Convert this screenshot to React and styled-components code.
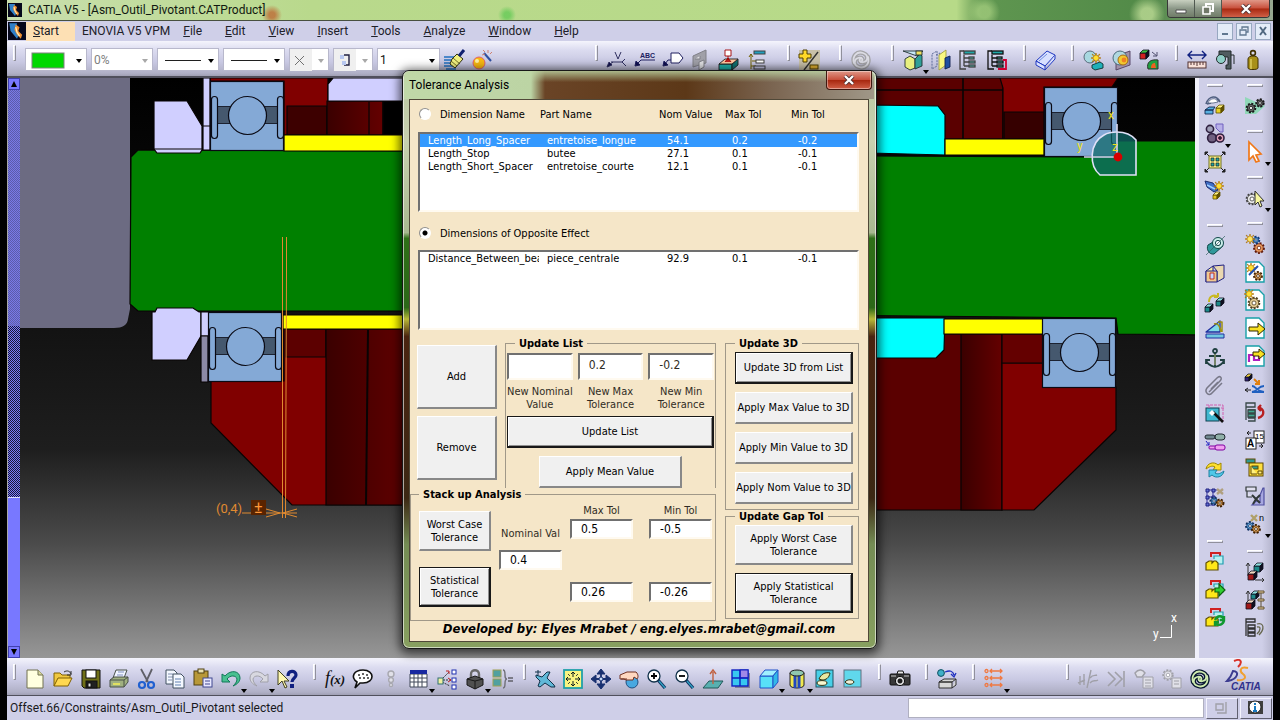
import React, { useState } from "react";
//packages
import styled, { createGlobalStyle, css } from "styled-components";

//small shapes shared by several icons
const Gear = ({ x, y, r = 4, fill = "#f0b060", line = "#402000" }) => (
	<g>
		<circle cx={x} cy={y} r={r} fill={fill} stroke={line} strokeWidth="2.6" strokeDasharray="1.8 1.3" />
		<circle cx={x} cy={y} r={r - 0.4} fill={fill} stroke={line} strokeWidth="0.7" />
		<circle cx={x} cy={y} r={r * 0.4} fill="#fff" stroke={line} strokeWidth="0.8" />
	</g>
);

const Cube = ({ x, y, s = 7, fill = "#1c8a8a", top = "#8fe0e0", line = "#101020" }) => (
	<g stroke={line} strokeWidth="0.8" strokeLinejoin="round">
		<path d={`M${x} ${y + 3}h${s}v${s}h${-s}z`} fill={fill} />
		<path d={`M${x} ${y + 3}l3-3h${s}l-3 3z`} fill={top} />
		<path d={`M${x + s} ${y + 3}l3-3v${s}l-3 3z`} fill={line} />
	</g>
);

const Spark = ({ x, y, fill = "#ffe030" }) => (
	<path
		d={`M${x} ${y - 5}l1 3 3-2-2 3 3 1-3 1 2 3-3-2-1 3-1-3-3 2 2-3-3-1 3-1-2-3 3 2z`}
		fill={fill}
		stroke="#a06000"
		strokeWidth="0.6"
	/>
);

const Sheet = () => (
	<path d="M1 0h13l5 5v15H1z" fill="#fff" stroke="#18a0a8" strokeWidth="1.4" />
);

const hook = "M3 13C1 6 6 1 12 3s5 8 1 9-6-2-3-4";

const Swirl = ({ line, fill }) => (
	<g fill="none" strokeLinecap="round">
		{[line, fill].map((color, i) => (
			<g key={color} stroke={color} strokeWidth={i ? 1.8 : 4.4}>
				<path d={hook} />
				<path d={hook} transform="rotate(180 10 10)" />
			</g>
		))}
	</g>
);

const Lens = ({ plus }) => (
	<g fill="none">
		<path d="M11 11l7 8" stroke="#103060" strokeWidth="3.4" />
		<path d="M12 12l6 7" stroke="#30a0c0" strokeWidth="1.4" />
		<circle cx="7" cy="7" r="6" fill="#fff" stroke="#103048" strokeWidth="1.3" />
		<path d={plus ? "M4 7h6M7 4v6" : "M4 7h6"} stroke="#000" strokeWidth="1.8" />
	</g>
);

const TreeGlyph = ({ line = "#404040", children }) => (
	<g fill="none" stroke={line} strokeWidth="1.3">
		<path d="M5 1H1v18h6M5 5v11M5 8h5M5 12h5M5 16h5" />
		<rect x="5" y="1" width="11" height="3" fill="#20a8a8" />
		<rect x="10" y="7" width="5" height="2" fill="#50c0b8" />
		<rect x="10" y="11" width="6" height="2" fill="#50c0b8" />
		<rect x="10" y="15" width="6" height="2" fill="#50c0b8" />
		{children}
	</g>
);

const PartStack = ({ children }) => (
	<g strokeWidth="1.2">
		<path d="M6 5V1h9v3" fill="none" stroke="#d02020" strokeWidth="2" />
		<path d="M9 7V4h9v8h-5" fill="#b8f0f0" stroke="#20a0b0" />
		<path d="M1 11l3-2h3v2l2-2h2l2 2v7H1z" fill="#ffe818" stroke="#605000" />
		{children}
	</g>
);

const icons = {
	paint: (
		<g>
			<path d="M0 7h10M0 10h9M0 13h9M0 16h10M2 19h10" stroke="#2070c0" strokeWidth="1.5" />
			<path d="M8 9l5-5 6 5-8 9-5-4z" fill="#f0f080" stroke="#303010" />
			<path d="M9 8l7 6M7 11l6 5" stroke="#505010" strokeWidth="0.8" />
			<path d="M15 6l5-6" stroke="#102070" strokeWidth="3" />
		</g>
	),
	wizard: (
		<g>
			<circle cx="7" cy="13" r="6" fill="#f8b810" stroke="#e06070" />
			<circle cx="5" cy="11" r="2" fill="#fff0a0" />
			<path d="M12 3l7 8" stroke="#3050a0" strokeWidth="2" />
			<path d="M11 0l2 2M16 0v3M10 5l3-1M18 4l2-2" stroke="#d08070" />
		</g>
	),
	weld: (
		<g fill="none" stroke="#303060">
			<path d="M8 2l3 7 3-7M4 12h12M18 9l-3 3 4 4M2 15l4-3" />
			<path d="M0 17l5-2-3-3z" fill="#101050" />
		</g>
	),
	textNote: (
		<g fill="none" stroke="#202060">
			<path d="M2 14l4-4h14" />
			<path d="M0 16l5-1-4-4z" fill="#101050" />
			<text x="5" y="8" fontSize="7" fontWeight="bold" fontFamily="Liberation Sans, sans-serif" fill="#202060" stroke="none">ABC</text>
		</g>
	),
	flagNote: (
		<g stroke="#202060">
			<path d="M8 3h8l4 5-4 5H8z" fill="#fff" />
			<path d="M8 10H5l-3 4" fill="none" />
			<path d="M0 16l5-1-4-4z" fill="#101050" />
		</g>
	),
	front: (
		<g stroke="#808088">
			<path d="M2 6L15 0v13L2 17z" fill="#a0a0a8" />
			<path d="M4 9h5v-3M13 10l-5 2v8l5-3z" fill="#e0e0e4" />
		</g>
	),
	stamp: (
		<g stroke="#202020" strokeWidth="0.9">
			<path d="M0 14h13v6H0z" fill="#20b0a8" />
			<path d="M13 14l6-5v6l-6 5z" fill="#107070" />
			<path d="M0 14l6-5h13l-6 5z" fill="#ffc8a0" />
			<path d="M6 0h6v6H6z" fill="#fff" stroke="#a00000" />
			<path d="M9 6v4M6 12l3-4 3 4" fill="#c02020" stroke="#a00000" />
		</g>
	),
	annotTree: (
		<g fill="none" stroke="#404040">
			<path d="M4 19V4M2 7l2-3 2 3M5 11h4M4 16h5" stroke="#706000" />
			<rect x="7" y="1" width="11" height="3" fill="#20a0c0" />
			<rect x="9" y="10" width="8" height="3" fill="#fff" />
			<rect x="7" y="16" width="11" height="3" fill="#c0c0e0" />
		</g>
	),
	plusMinus: (
		<g>
			<rect width="21" height="20" fill="#c8c0a8" />
			<path d="M4 0h4v4h4v4H8v4H4V8H0V4h4z" fill="#ffd828" stroke="#504000" />
			<path d="M19 2L5 20" stroke="#303030" strokeWidth="1.4" />
			<rect x="11" y="15" width="8" height="4" fill="#e0b030" stroke="#504000" />
		</g>
	),
	swirlGray: <Swirl line="#a4a4a8" fill="#dcdce4" />,
	sectionCut: (
		<g stroke="#203030" strokeWidth="0.9">
			<path d="M0 1h20l-6 5z" fill="#c8e8f8" />
			<path d="M2 9l5-3 5 3v9l-5 2-5-3z" fill="#e8f080" />
			<path d="M12 9l5-5 2 2v10l-7 3z" fill="#30a098" />
			<rect x="13" y="1" width="6" height="4" fill="#f0e060" />
		</g>
	),
	mirror: (
		<g strokeWidth="0.9">
			<path d="M1 4l5-3v15l-5 3zM5 5l4-2v12" fill="none" stroke="#506090" strokeDasharray="2 1" />
			<path d="M8 5l7-5v15l-7 5z" fill="#f8f880" stroke="#a0a040" />
			<path d="M14 8l5-2v11l-5 2z" fill="#2050a0" stroke="#102050" />
		</g>
	),
	tree: <TreeGlyph />,
	treeRed: (
		<TreeGlyph line="#101010">
			<path d="M16 10h3v9h-8" stroke="#d00030" strokeWidth="1.8" />
		</TreeGlyph>
	),
	book: (
		<g fill="#d8e0ff" stroke="#2038c0" strokeLinejoin="round">
			<path d="M1 11L12 1l8 4-10 11z" />
			<path d="M1 11l9 5v4l-9-5zM10 20l10-11V5" />
			<path d="M4 11l8-7" stroke="#7090e0" />
		</g>
	),
	clash: (
		<g stroke="#103030" strokeWidth="0.9">
			<circle cx="7" cy="7" r="6" fill="#a8d8e0" stroke="#506070" />
			<path d="M9 15l8-3 3 2v4l-8 2-3-2z" fill="#20b0b8" />
			<Spark x={13} y={8} />
		</g>
	),
	sectionBall: (
		<g strokeWidth="0.9">
			<path d="M5 6L19 1v14L5 20z" fill="#a090a8" stroke="#504060" />
			<circle cx="9" cy="8" r="7" fill="#b0d8e0" stroke="#406070" />
			<circle cx="12" cy="10" r="5" fill="#f0c830" stroke="#a06010" />
			<circle cx="13" cy="10" r="2.4" fill="#f08020" />
		</g>
	),
	compareParts: (
		<g>
			<Cube x={1} y={0} s={6} fill="#d02020" top="#40c040" />
			<path d="M13 2l5 4M18 2v4h-4" stroke="#505070" fill="none" />
			<path d="M9 19c-2-7 3-10 10-9v9z" fill="#20a040" stroke="#303030" />
			<path d="M12 18c0-4 2-5 4-5l1 5z" fill="#f06020" />
		</g>
	),
	ruler: (
		<g stroke="#102080" fill="none">
			<path d="M1 5h18M5 1L1 5l4 4M15 1l4 4-4 4" strokeWidth="1.4" />
			<rect x="1" y="12" width="18" height="6" fill="#f8e0d8" stroke="#503030" />
			<path d="M4 12v3M7 12v3M10 12v4M13 12v3M16 12v3" stroke="#503030" />
		</g>
	),
	caliper: (
		<g stroke="#202828">
			<path d="M4 1h12v18h-5v-4h2V7H9v4H6V5H4z" fill="#505c60" />
			<circle cx="6" cy="9" r="4.5" fill="#90d0c8" />
			<path d="M16 5h3v9" fill="none" />
		</g>
	),
	weight: (
		<g stroke="#403000">
			<circle cx="10" cy="3" r="2.4" fill="none" strokeWidth="1.6" />
			<path d="M5 9c0-4 10-4 10 0v9c0 2-10 2-10 0z" fill="#a89018" />
			<path d="M8 9v10" stroke="#e0d060" strokeWidth="1.4" />
		</g>
	),
	assemble: (
		<g>
			<path d="M1 8c3-9 11-9 14-2M2 8l4-1M12 3l3 3" stroke="#506080" fill="none" strokeWidth="1.6" />
			<path d="M3 7c2-5 8-6 10-1l-5 1z" fill="#fff" stroke="#506080" strokeWidth="0.8" />
			<path d="M0 14l4-3h6l-2 3zM0 14h8v4H0z" fill="#58b0e0" stroke="#102850" strokeWidth="0.9" />
			<Cube x={11} y={9} s={5} fill="#e8d020" top="#fff080" line="#605000" />
		</g>
	),
	replaceParts: (
		<g stroke="#302040">
			<path d="M11 0h7v8h-3l-4-4z" fill="#b8b0e8" stroke="#7060c0" />
			<circle cx="5" cy="5" r="3.6" fill="#a0a0b8" strokeWidth="1.6" />
			<circle cx="7" cy="14" r="4.4" fill="#706080" strokeWidth="1.6" />
			<circle cx="15" cy="14" r="4" fill="#e0a0b8" strokeWidth="1.6" />
			<circle cx="15" cy="14" r="1.4" fill="#401020" />
		</g>
	),
	explode: (
		<g stroke="#202020">
			<path d="M0 0l5 5M20 0l-5 5M0 20l5-5M20 20l-5-5" />
			<path d="M0 0h3L0 3zM20 0h-3l3 3zM0 20h3l-3-3zM20 20h-3l3-3z" fill="#202020" />
			<rect x="4" y="4" width="12" height="12" fill="#f8f088" stroke="#707020" />
			<path d="M6 6h3v3H6zM11 6h3v3h-3zM6 11h3v3H6zM11 11h3v3h-3z" fill="#20a8a0" strokeWidth="0.7" />
		</g>
	),
	smartMove: (
		<g strokeWidth="0.9">
			<path d="M0 1l8 2 5 7-4 2-7-5z" fill="#4070c8" stroke="#102060" />
			<path d="M2 5l8 4" stroke="#a0d0ff" strokeWidth="1.4" />
			<Cube x={8} y={12} s={4} fill="#e8c820" top="#fff080" line="#605000" />
			<Spark x={14} y={6} />
		</g>
	),
	coincidence: (
		<g stroke="#104848">
			<path d="M3 9L13 3l5 7-9 8c-5 1-8-5-6-9z" fill="#30989a" />
			<circle cx="13" cy="7" r="5.5" fill="#c8ece8" />
			<circle cx="13" cy="7" r="2.6" fill="#f4fcff" />
			<path d="M1 19L20 0" stroke="#306060" strokeWidth="0.7" />
		</g>
	),
	contact: (
		<g stroke="#202080" strokeLinejoin="round">
			<path d="M1 7l7-5v11l-7 5z" fill="#f8f0a0" />
			<path d="M8 2l11-1v13l-7 4V7z" fill="#ead8b0" />
			<path d="M1 7h11v11H1z" fill="#f0c890" />
			<path d="M5 9h4v6H5z" fill="#c8d8ff" stroke="#c03020" />
		</g>
	),
	offset: (
		<g>
			<path d="M4 10c0-6 5-8 9-5M13 5l-4 0M13 5l0-4" stroke="#c8b820" strokeWidth="2" fill="none" />
			<Cube x={0} y={12} s={5} />
			<Cube x={11} y={6} s={5} />
		</g>
	),
	angle: (
		<g strokeLinejoin="round">
			<path d="M1 12L15 1v11z" fill="#80d8e8" stroke="#2030a0" strokeWidth="1.3" />
			<path d="M9 4c4-1 6 2 7 8M13 2h4v10" stroke="#a09010" fill="none" strokeWidth="1.5" />
			<path d="M1 14h18v4H1z" fill="#70c8e0" stroke="#2030a0" />
		</g>
	),
	anchor: (
		<g fill="none" stroke="#204040" strokeWidth="1.8">
			<circle cx="10" cy="3" r="2" />
			<path d="M10 5v14M4 8h12M1 12c1 4 5 6 9 7 4-1 8-3 9-7M1 16v-4h4M19 16v-4h-4" />
			<path d="M10 6v11" stroke="#e0d890" strokeWidth="0.8" />
		</g>
	),
	clip: (
		<path
			d="M4 16L15 5c3-3 0-6-3-3L2 12c-3 4 2 9 5 5L17 7M6 13l7-7"
			fill="none"
			stroke="#787888"
			strokeWidth="1.5"
		/>
	),
	quick: (
		<g>
			<rect x="1" y="4" width="13" height="13" fill="#40b8d0" stroke="#104050" />
			<path d="M1 1h17v16M4 1v3M16 4h3" stroke="#d060b0" fill="none" strokeDasharray="3 1" />
			<path d="M8 8l10 10" stroke="#101010" strokeWidth="2.6" />
			<path d="M4 9l3-3 3 3-3 3z" fill="#fff" />
		</g>
	),
	flexible: (
		<g>
			<rect x="0" y="3" width="10" height="4" rx="2" fill="#708890" stroke="#202830" />
			<rect x="10" y="2" width="10" height="6" rx="3" fill="#90b0a8" stroke="#202830" />
			<path d="M1 9l3 4M4 10v3H1" stroke="#2020c0" fill="none" />
			<rect x="4" y="14" width="7" height="3" rx="1" fill="#f0a0f0" stroke="#8000a0" />
			<rect x="10" y="13" width="10" height="5" rx="2" fill="#f0a0f0" stroke="#8000a0" />
		</g>
	),
	change: (
		<g>
			<path d="M1 9c1-6 8-8 12-4l3-2v7H8l2-3c-3-2-6 0-9 2z" fill="#ffe030" stroke="#a08800" />
			<path d="M19 11c-1 6-8 8-12 4l-3 2v-7h8l-2 3c3 2 6 0 9-2z" fill="#50c8e8" stroke="#2080a0" />
		</g>
	),
	pattern: (
		<g>
			<path d="M2 2v16M8 2v16M2 2h10M2 9h8M2 17h8" stroke="#3030a0" />
			<path d="M1 1h3v3H1zM7 1h3v3H7zM1 8h3v3H1zM7 8h3v3H7zM1 15h3v3H1z" fill="#6070d0" stroke="#202080" />
			<path d="M12 1l6 5M18 1l-6 5" stroke="#b0a080" strokeWidth="2.4" />
			<Gear x={9} y={13} r={3.2} fill="#60a8e0" line="#103060" />
			<Gear x={15} y={15} r={3.2} />
		</g>
	),
	stack1: <PartStack />,
	stack2: (
		<PartStack>
			<path d="M10 8h4V4l6 6-6 6v-4h-4z" fill="#30d030" stroke="#106010" />
		</PartStack>
	),
	stack3: (
		<PartStack>
			<path d="M10 12c2-5 8-5 9 0M19 13c-2 5-8 5-9 1M19 8v4h-4M10 18v-4h4" stroke="#109830" strokeWidth="2.4" fill="none" />
		</PartStack>
	),
	gearsDark: (
		<g>
			<path d="M0 1l20 9-9 8H0z" fill="#90d8b8" />
			<Gear x={6} y={12} r={4} fill="#686868" line="#181818" />
			<Gear x={15} y={7} r={3.4} fill="#686868" line="#181818" />
		</g>
	),
	arrowOrange: (
		<path d="M4 0l12 12-5 1 3 6-3 1-3-6-4 4z" fill="#fff" stroke="#f07818" strokeWidth="1.7" />
	),
	gearCursor: (
		<g>
			<Gear x={7} y={11} r={5} fill="#e8e8e8" line="#404040" />
			<path d="M10 3l9 10-4 0 2 5-2 1-2-5-3 3z" fill="#f8f8a0" stroke="#303030" />
		</g>
	),
	gearSpark: (
		<g>
			<Gear x={14} y={14} r={4.6} fill="#f0a060" line="#601808" />
			<Gear x={11} y={6} r={3} fill="#60b0e0" line="#103878" />
			<Spark x={5} y={5} fill="#ffe860" />
		</g>
	),
	gearSheet1: (
		<g>
			<Sheet />
			<Spark x={6} y={6} />
			<path d="M4 13l9-9" stroke="#2050b0" strokeWidth="2" />
			<Gear x={13} y={14} r={3.6} />
		</g>
	),
	gearSheet2: (
		<g>
			<Sheet />
			<Gear x={9} y={13} r={5} fill="#e0c890" line="#504020" />
			<Spark x={4} y={4} />
		</g>
	),
	sheetArrow: (
		<g>
			<Sheet />
			<path d="M4 9h9V5l7 6-7 6v-4H4z" fill="#f8e020" stroke="#302800" />
		</g>
	),
	sheetLink: (
		<g>
			<Sheet />
			<path d="M4 16V9h5v5h5V9" fill="none" stroke="#b020c0" strokeWidth="2.2" />
			<path d="M8 6h6V3l6 5-6 5v-3H8z" fill="#f8e020" stroke="#302800" />
		</g>
	),
	isolate: (
		<g>
			<Cube x={0} y={0} s={4} fill="#302078" top="#f0d040" />
			<path d="M9 5l5 5M14 6v4h-4" stroke="#e08010" strokeWidth="2" fill="none" />
			<path d="M7 12c4 0 4 5 12 6M19 12c-6 0-6 5-12 6h12" stroke="#2060c0" strokeWidth="1.8" fill="none" />
			<path d="M0 16h6M3 14l-3 2 3 2" stroke="#202020" fill="none" />
		</g>
	),
	treeUndo: (
		<g fill="none" stroke="#384848" strokeWidth="1.3">
			<path d="M1 5V1h9v4H1v13M3 8h7v3H3M3 12h7v3H3M3 16h7v3H3" />
			<path d="M3 8h7v3H3zM3 12h7v3H3z" fill="#40a890" />
			<path d="M13 6c6-1 8 8 0 10M13 6l3-3M13 6l3 3" stroke="#b82020" strokeWidth="2.4" />
		</g>
	),
	renumber: (
		<g stroke="#202020" fill="#fff">
			<rect x="9" y="1" width="10" height="12" />
			<rect x="1" y="8" width="10" height="11" />
			<path d="M2 3h4M4 1L2 3l2 2M14 16h4M16 14l2 2-2 2" fill="none" />
			<text x="2" y="17" fontSize="10" fontFamily="Liberation Sans, sans-serif" fontWeight="bold" fill="#000" stroke="none">A</text>
			<text x="10" y="9" fontSize="8" fontFamily="Liberation Sans, sans-serif" fill="#000" stroke="none">15</text>
		</g>
	),
	reorder: (
		<g stroke="#604800">
			<rect x="1" y="1" width="9" height="4" fill="#309890" />
			<rect x="4" y="5" width="14" height="13" fill="#ffe040" />
			<rect x="7" y="8" width="6" height="3" fill="#30a090" />
			<path d="M6 8v8h6M13 13h4v3h-4z" fill="#fff080" />
		</g>
	),
	treeBlue: (
		<g fill="none" stroke="#303838" strokeWidth="1.2">
			<path d="M19 2v17H7l4-4 4 1V9l3-7z" fill="#a8a8e0" stroke="#5050a0" />
			<path d="M1 1h10v4H1zM2 5v6h5" fill="#e0e0f0" />
			<path d="M7 9l4 4 4-4M11 13l-3 5M11 13l4 4" strokeWidth="2" />
		</g>
	),
	gearsN: (
		<g>
			<path d="M6 1l6 6M12 1L6 7" stroke="#b0a068" strokeWidth="2.4" />
			<text x="14" y="7" fontSize="9" fontFamily="Liberation Sans, sans-serif" fill="#000">n</text>
			<Gear x={5} y={12} r={3.6} fill="#60a8e0" line="#103060" />
			<Gear x={11} y={15} r={3.6} />
		</g>
	),
	cubeFrame: (
		<g>
			<path d="M3 14V1M1 4l2-3 2 3M10 18h9M17 16l2 2-2 2" stroke="#303030" fill="none" />
			<Cube x={9} y={1} s={6} />
			<Cube x={3} y={9} s={6} fill="#a01818" top="#f0d8c0" />
		</g>
	),
	cubeBars: (
		<g>
			<path d="M3 14V1M1 4l2-3 2 3" stroke="#303030" fill="none" />
			<Cube x={6} y={1} s={5} />
			<Cube x={1} y={10} s={6} fill="#a01818" top="#f0d8c0" />
			<path d="M13 1h6v2h-6zM13 9h6v2h-6zM13 17h6v2h-6zM16 3v6M16 11v6" fill="#e8d0a0" stroke="#605030" />
		</g>
	),
	treeClip: (
		<g fill="none" stroke="#303030" strokeWidth="1.3">
			<path d="M1 4V1h9v3H1v14M3 7h7v3H3zM3 11h7v3H3zM3 15h7v3H3z" />
			<path d="M12 6c7-2 8 5 2 11M12 9c4-1 4 3 0 7" stroke="#686850" />
		</g>
	),
	newDoc: (
		<g>
			<path d="M2 1h11l5 5v13H2z" fill="#ffffe0" stroke="#707050" />
			<path d="M13 1v5h5" fill="#d8d8a0" stroke="#707050" />
		</g>
	),
	open: (
		<g stroke="#806000">
			<path d="M1 17V4h6l2 2h8v4" fill="#f0c840" />
			<path d="M1 17l4-8h14l-4 8z" fill="#ffd850" />
			<path d="M11 3c3-2 6-1 7 2M18 2v4h-4" fill="none" stroke="#303030" />
		</g>
	),
	save: (
		<g stroke="#101010">
			<path d="M1 1h18v18H3l-2-2z" fill="#707018" />
			<rect x="5" y="1" width="10" height="8" fill="#fff" />
			<rect x="5" y="12" width="11" height="7" fill="#202020" />
			<rect x="7" y="14" width="3" height="4" fill="#e0e0e0" />
		</g>
	),
	print: (
		<g stroke="#485048">
			<path d="M7 1h11l-3 8H4z" fill="#f0f4ff" />
			<path d="M9 3h6M8 6h6" stroke="#8090c0" />
			<path d="M1 11l4-3h14v5l-4 5H1z" fill="#a0b080" />
			<path d="M1 11h14v7M15 11l4-3" fill="none" />
			<path d="M4 15h7" stroke="#e0e060" strokeWidth="2" />
		</g>
	),
	cut: (
		<g fill="none">
			<path d="M4 0l7 13M15 0L9 13" stroke="#606068" strokeWidth="1.8" />
			<circle cx="5" cy="16" r="3" stroke="#2060d0" strokeWidth="2.2" />
			<circle cx="14" cy="16" r="3" stroke="#2060d0" strokeWidth="2.2" />
		</g>
	),
	copy: (
		<g stroke="#405060" fill="#f4f8ff">
			<path d="M1 1h8l3 3v11H1z" />
			<path d="M3 5h5M3 8h5M3 11h4" stroke="#8090b0" />
			<path d="M8 5h8l3 3v11H8z" />
			<path d="M10 10h6M10 13h6M10 16h6" stroke="#6080b0" />
		</g>
	),
	paste: (
		<g stroke="#504010">
			<rect x="1" y="2" width="14" height="14" fill="#b89838" />
			<rect x="5" y="0" width="6" height="4" fill="#e8e0b0" />
			<rect x="10" y="9" width="9" height="9" fill="#e8e8ff" stroke="#404890" />
			<path d="M12 12h5M12 15h5" stroke="#404890" />
		</g>
	),
	undo: (
		<path d="M1 5v8h8l-3-3c3-4 9-4 10 0 0 3-2 5-4 7 5-2 7-5 7-8 0-7-9-9-15-2z" fill="#48c090" stroke="#107858" />
	),
	redo: (
		<path d="M19 5v8h-8l3-3c-3-4-9-4-10 0 0 3 2 5 4 7-5-2-7-5-7-8 0-7 9-9 15-2z" fill="#d8d8e0" stroke="#a0a0a8" />
	),
	whats: (
		<g>
			<path d="M1 1v15l4-4 3 7 2-1-3-6h5z" fill="#fff8b0" stroke="#404020" />
			<path d="M11 7c0-6 8-6 8-1 0 3-4 3-4 7" fill="none" stroke="#102080" strokeWidth="3.2" />
			<rect x="13" y="15" width="4" height="4" fill="#102080" />
		</g>
	),
	fx: (
		<text x="0" y="15" fontSize="18" fontStyle="italic" fontFamily="Liberation Serif, serif" fill="#101010">
			f<tspan fontSize="13" fontWeight="bold">(x)</tspan>
		</text>
	),
	speech: (
		<g>
			<path d="M10 1c12 0 12 13 0 13l-3 0-5 5 2-6C-3 8 1 1 10 1z" fill="#fff" stroke="#101010" strokeWidth="1.6" />
			<path d="M5 6h2M9 5h2M13 6h2M6 9h2M10 9h2M14 9h2" stroke="#303030" strokeWidth="1.4" />
		</g>
	),
	light: (
		<g fill="#e0e0e8" stroke="#a8a8b0" strokeWidth="1.4">
			<circle cx="10" cy="5" r="3" />
			<circle cx="10" cy="11" r="2.4" />
			<circle cx="10" cy="16" r="1.6" />
		</g>
	),
	grid: (
		<g>
			<path d="M1 5h17v13H1zM5 5v13M9 5v13M13 5v13M1 9h17M1 13h17" fill="#fff" stroke="#404858" />
			<rect x="1" y="1" width="17" height="4" fill="#1828a0" />
		</g>
	),
	network: (
		<g stroke="#2030b0" fill="#fff">
			<path d="M4 11l8-8M6 11h8M5 13l8 4" stroke="#303030" strokeDasharray="2 1" />
			<path d="M9 2h3v3M11 9l3 2-3 2" stroke="#c02020" fill="none" />
			<rect x="1" y="9" width="5" height="6" fill="#f0f0a0" stroke="#307070" />
			<rect x="15" y="1" width="4" height="4" />
			<rect x="15" y="9" width="4" height="4" />
			<rect x="15" y="16" width="4" height="4" />
		</g>
	),
	lock: (
		<g stroke="#181818">
			<path d="M6 9V5c0-5 8-5 8 0v4" fill="none" stroke="#686868" strokeWidth="2.4" />
			<path d="M2 10l8-3 8 3v6l-8 4-8-4z" fill="#505050" />
			<path d="M10 12v8M2 10l8 2 8-2" fill="none" />
		</g>
	),
	law: (
		<g>
			<rect x="0" y="1" width="8" height="7" fill="#50a0a0" stroke="#a0a050" />
			<rect x="0" y="10" width="8" height="7" fill="#50a0a0" stroke="#a0a050" />
			<path d="M10 1c4 0 0 9 4 9-4 0 0 9-4 9" fill="none" stroke="#707078" strokeWidth="1.4" />
			<path d="M15 9h5M15 12h5" stroke="#606068" strokeWidth="1.4" />
		</g>
	),
	fly: (
		<g stroke="#103048" strokeLinejoin="round">
			<path d="M1 6l6 2 5-5 3 0-3 6 7 7 1 2-4 0-6-4-5 4-2-1 2-5-4-4z" fill="#60b8d8" />
			<path d="M0 3h6M3 1v5" />
		</g>
	),
	fitAll: (
		<g stroke="#102020">
			<rect x="1" y="1" width="18" height="18" fill="#f8f480" stroke="#20a0a8" strokeWidth="1.8" />
			<path d="M10 3v5M10 12v5M3 10h5M12 10h5M8 5l2-2 2 2M8 15l2 2 2-2M5 8l-2 2 2 2M15 8l2 2-2 2" fill="none" />
			<path d="M5 5l2 2M15 5l-2 2M5 15l2-2M15 15l-2-2" strokeWidth="0.8" />
		</g>
	),
	pan: (
		<g stroke="#183070" fill="#183070">
			<path d="M10 4v12M4 10h12" strokeWidth="1.8" />
			<path d="M10 0l4 5H6zM10 20l4-5H6zM0 10l5-4v8zM20 10l-5-4v8z" />
			<circle cx="10" cy="10" r="2" fill="#c0d8f8" />
		</g>
	),
	rotate: (
		<g stroke="#703020">
			<circle cx="13" cy="13" r="6" fill="#48a8e0" stroke="#205080" />
			<path d="M1 6l7-3h9c3 3 2 6 1 7l-3-2-1 3H7l-2-1H1z" fill="#ffd8c0" />
			<path d="M2 10h6" />
		</g>
	),
	zoomIn: <Lens plus />,
	zoomOut: <Lens />,
	normal: (
		<g>
			<path d="M0 19l6-7h14l-5 7z" fill="#58b0b0" stroke="#205858" />
			<path d="M10 15V3M7 5l3-4 3 4" stroke="#c06040" fill="none" strokeWidth="1.4" />
		</g>
	),
	multiView: (
		<g stroke="#1020c0">
			<rect x="4" y="4" width="15" height="15" fill="#808098" stroke="none" />
			<rect x="1" y="1" width="16" height="16" fill="#38c8f0" strokeWidth="1.4" />
			<rect x="9" y="1" width="8" height="8" fill="#a088e8" />
			<path d="M9 1v16M1 9h16" strokeWidth="1.4" />
		</g>
	),
	isoView: (
		<g fill="#58e0f8" stroke="#2050c8" strokeLinejoin="round">
			<path d="M1 7h13v12H1z" />
			<path d="M1 7l5-6h13l-5 6z" fill="#a0f0ff" />
			<path d="M14 7l5-6v12l-5 6z" fill="#30b8e8" />
		</g>
	),
	shading: (
		<g stroke="#202020">
			<path d="M3 4v12c0 4 14 4 14 0V4" fill="#f0e850" />
			<path d="M8 6v13M12 6v13" stroke="#2048c0" strokeWidth="3" />
			<ellipse cx="10" cy="4" rx="7" ry="3" fill="#90c8b0" />
		</g>
	),
	hide: (
		<g stroke="#303010">
			<rect x="1" y="1" width="17" height="17" fill="#48d0e8" stroke="#205060" />
			<path d="M4 10c2-5 6-7 11-6-1 5-4 7-8 7z" fill="#e8e8a0" />
			<ellipse cx="7" cy="14" rx="5" ry="2.4" fill="#f8f8d0" />
		</g>
	),
	swap: (
		<g stroke="#303010">
			<rect x="1" y="1" width="17" height="17" fill="#60d8ec" stroke="#607080" />
			<path d="M2 13c2-3 8-3 9 0-1 3-7 3-9 0z" fill="#f0f0d8" />
		</g>
	),
	camera: (
		<g stroke="#101010">
			<path d="M7 5l1-3h5l1 3" fill="#e8e8e8" />
			<rect x="0" y="5" width="20" height="11" rx="1" fill="#383838" />
			<path d="M1 7h5M14 7h5" stroke="#c8c8c8" />
			<circle cx="10" cy="12" r="4.6" fill="#d8d8d8" />
			<circle cx="10" cy="12" r="2" fill="#202020" />
		</g>
	),
	catalogArrow: (
		<g>
			<circle cx="4" cy="4" r="3.4" fill="#40b0c8" stroke="#105060" />
			<path d="M8 3c5-2 8-1 9 3M14 5l3 3 2-4" fill="none" stroke="#2030c0" strokeWidth="1.3" />
			<path d="M2 13l5-3h12l-4 3zM2 13h13v6H2zM15 19l4-3v-6" fill="#d8d8d8" stroke="#303030" />
		</g>
	),
	dims: (
		<g stroke="#f07840" fill="none" strokeWidth="1.3">
			{[2, 9, 16].map((y) => (
				<path key={y} d={`M1 ${y}a1 1 0 1 0 3 0a1 1 0 1 0-3 0M6 ${y}h12M8 ${y - 2}l-2 2 2 2M16 ${y - 2}l2 2-2 2`} />
			))}
		</g>
	),
	ghostCut: (
		<g fill="none" stroke="#a0a0a8" strokeWidth="1.4">
			<path d="M0 14l7-3M2 7v9M6 5v11M13 1L9 19M12 9c3-4 5-2 7-3M12 14c3-4 5-1 8-3" />
		</g>
	),
	ghostNext: <path d="M2 3l7 7-7 7M9 3l7 7-7 7M18 2v16" fill="none" stroke="#a0a0a8" strokeWidth="1.6" />,
	ghostDoc: (
		<g stroke="#a0a0a8" fill="#e0e0e8">
			<path d="M1 4c4-5 8-3 10 0l-3 4-5 0z" strokeWidth="1.4" />
			<path d="M9 8h10v11H9zM11 11h6M11 14h6M11 17h6" />
		</g>
	),
	ghostGear: (
		<g stroke="#a0a0a8" fill="#e0e0e8">
			<Gear x={6} y={6} r={4.4} fill="#e0e0e8" line="#a0a0a8" />
			<path d="M10 9h9v10h-9zM12 12h5M12 15h5" />
		</g>
	),
	swirlDark: <Swirl line="#081830" fill="#d0ecb0" />,
};

const topGroups = [
	{ gap: 16, items: ["weld", "textNote", "flagNote", "front", "stamp", "annotTree"] },
	{ gap: 16, items: ["plusMinus"] },
	{ gap: 16, items: ["swirlGray"] },
	{ gap: 12, items: ["sectionCut*", "mirror", "tree", "treeRed"] },
	{ gap: 12, items: ["book"] },
	{ gap: 12, items: ["clash", "sectionBall", "compareParts"] },
	{ gap: 0, items: ["ruler", "caliper", "weight"] },
];

const bottomGroups = [
	{
		gap: 12,
		items: ["newDoc", "open", "save", "print", "cut", "copy", "paste", "undo*", "redo*", "whats"],
	},
	{ gap: 6, items: ["fx", "speech", "light", "grid*", "network", "lock*", "law"] },
	{
		gap: 11,
		items: [
			"fly", "fitAll", "pan", "rotate", "zoomIn", "zoomOut", "normal",
			"multiView", "isoView*", "shading*", "hide", "swap",
		],
	},
	{ gap: 11, items: ["camera"] },
	{ gap: 11, items: ["catalogArrow"] },
	{ gap: 58, items: ["dims*"] },
	{ gap: 10, items: ["ghostCut", "ghostNext", "ghostDoc", "ghostGear", "swirlDark"] },
];

const sideColumns = [
	[
		{ gap: 20, items: ["assemble", "replaceParts*", "explode", "smartMove"] },
		{
			gap: 28,
			items: ["coincidence", "contact", "offset", "angle", "anchor", "clip", "quick", "flexible", "change", "pattern"],
		},
		{ gap: 0, items: ["stack1", "stack2", "stack3"] },
	],
	[
		{ gap: 10, items: ["gearsDark"] },
		{ gap: 10, items: ["arrowOrange*"] },
		{ gap: 10, items: ["gearCursor*"] },
		{
			gap: 12,
			items: [
				"gearSpark", "gearSheet1", "gearSheet2", "sheetArrow", "sheetLink",
				"isolate", "treeUndo", "renumber", "reorder", "treeBlue", "gearsN*",
			],
		},
		{ gap: 0, items: ["cubeFrame", "cubeBars", "treeClip"] },
	],
];

const menus = ["Start", "ENOVIA V5 VPM", "File", "Edit", "View", "Insert", "Tools", "Analyze", "Window", "Help"];

const dimensions = [
	["Length_Long_Spacer", "entretoise_longue", "54.1", "0.2", "-0.2"],
	["Length_Stop", "butee", "27.1", "0.1", "-0.1"],
	["Length_Short_Spacer", "entretoise_courte", "12.1", "0.1", "-0.1"],
];

const opposite = [["Distance_Between_bea", "piece_centrale", "92.9", "0.1", "-0.1"]];

const ToolGroup = ({ group, vertical }) => (
	<StyGroup $vertical={vertical} $gap={group.gap}>
		<StyHandle $vertical={vertical} />
		{group.items.map((item) => {
			const name = item.replace("*", "");
			return (
				<StyTool key={name} type="button" aria-label={name} $more={item !== name}>
					<svg viewBox="0 0 20 20" width="20" height="20">
						{icons[name]}
					</svg>
				</StyTool>
			);
		})}
	</StyGroup>
);

const AppIcon = ({ size }) => (
	<svg width={size} height={size} viewBox="0 0 14 14">
		<rect width="14" height="14" fill="#06081c" />
		<path d="M1 1l6 0-1 5 3 3-2 4-5-6z" fill="#3080c8" />
		<path d="M6 2l3 2-1 3 3 3-1 3-3-3-2-4z" fill="#f09030" />
		<path d="M6 4l1 4 2 3" stroke="#fff0c0" fill="none" />
	</svg>
);

//one ball bearing seen in section
const Bearing = ({ x, y }) => (
	<g stroke="#0a0a14" strokeWidth="1.2">
		<rect x={x} y={y} width="73" height="69" fill="#84a9d6" />
		<path d={`M${x + 7} ${y + 25}h60v17h-60z`} fill="#45586e" strokeWidth="0.8" />
		<rect x={x + 1} y={y + 15} width="6" height="42" rx="3" fill="#84a9d6" />
		<rect x={x + 67} y={y + 15} width="6" height="42" rx="3" fill="#84a9d6" />
		<circle cx={x + 37} cy={y + 34} r="19" fill="#84a9d6" />
	</g>
);

const Scene = () => (
	<StyScene viewBox="20 78 1175 580" preserveAspectRatio="xMidYMid slice" role="img" aria-label="Section view">
		<defs>
			<linearGradient id="sky" x1="0" x2="0" y1="0" y2="1">
				<stop offset="0" stopColor="#000" />
				<stop offset="0.4" stopColor="#111" />
				<stop offset="0.64" stopColor="#1e1e1e" />
				<stop offset="0.8" stopColor="#4a4a4a" />
				<stop offset="1" stopColor="#979797" />
			</linearGradient>
			<linearGradient id="bore" x1="0" x2="1">
				<stop offset="0" stopColor="#3a0000" />
				<stop offset="1" stopColor="#640000" />
			</linearGradient>
		</defs>
		<rect x="20" y="78" width="1175" height="580" fill="url(#sky)" />
		<path d="M20 78h110v231l-2 10q-1 9-14 9H20z" fill="#6c6b82" />
		<g stroke="#080404" strokeWidth="1.2">
			{/* housing, left side */}
			<path d="M210 78h118v57h-44v-54h-74z" fill="#800000" />
			<path d="M287 106h40v29h-40z" fill="#3d0000" />
			<path d="M327 101h56v34h-56z" fill="url(#bore)" />
			<path d="M369 102v33" />
			<path d="M383 101h30v34h-30z" fill="#000" />
			<path d="M333 78h80v23h-85V84z" fill="#d0cfff" />
			<path d="M211 381v42l81 82h121V329H284v52z" fill="#800000" />
			<path d="M286 329h40v28h-40z" fill="#5c0000" />
			<path d="M326 329h87v176h-87z" fill="url(#bore)" />
			<path d="M368 330l-2 175" strokeWidth="2" />
			{/* housing, right side */}
			<path d="M870 78h133v61H870z" fill="#5a0000" />
			<path d="M870 90h133M963 78v61" fill="none" strokeWidth="1.6" />
			<path d="M1000 78h118l-6 9h-68v52h-41V88z" fill="#800000" />
			<path d="M1004 112h40v27h-40z" fill="#360000" />
			<path d="M870 334h132v176H870z" fill="#5a0000" />
			<path d="M961 334h41v176h-41z" fill="url(#bore)" />
			<path d="M1002 363h41v24h73v43l-82 80h-32z" fill="#800000" />
			<path d="M1002 334h41v29h-41z" fill="#640000" />
			{/* shaft */}
			<path d="M131 157l7-7 275 1 457 5 246 1v-16h90v194l-88-1-2-16-703-7H138l-8-7z" fill="#008000" />
			{/* nuts and washers */}
			<path d="M154 101h33l15 25v24l-2 3h-43l-3-4z" fill="#d0cfff" />
			<path d="M203 78h7v72h-7z" fill="#d0cfff" />
			<path d="M203 126h7M154 149h48" />
			<path d="M155 312l2-4h36l6 4h2v24l-14 24h-35v-48z" fill="#d0cfff" />
			<path d="M201 312h8v24h-8z" fill="#d0cfff" />
			<path d="M201 336h7v46h-7z" fill="#8c89a6" />
			<path d="M870 105l68 1 7 9v40l-75-2zM870 318h75l-1 32-8 8h-66z" fill="#00ffff" />
			<path d="M284 135h129v16H284zM283 315h130v14H283zM945 139h99v16h-99zM944 319h99v15h-99z" fill="#ffff00" />
		</g>
		<Bearing x={210.5} y={81.5} />
		<Bearing x={208.5} y={312.5} />
		<Bearing x={1044.5} y={87.5} />
		<Bearing x={1042.5} y={318.5} />
		{/* offset constraint */}
		<g stroke="#e08a30" fill="none">
			<path d="M282.5 237v281M286.5 237v35l-1 246M242 513h10M266 513h31M266 509l14 4-14 4M297 509l-14 4 14 4" />
		</g>
		<rect x="251" y="500" width="15" height="15" fill="#5a2400" />
		<text x="216" y="513" fontSize="13" fill="#e08a30">(0,4)</text>
		<text x="254" y="513" fontSize="16" fill="#ff9838">±</text>
		{/* compass */}
		<path d="M1117 132c8 0 14 2 19 8v35h-36c-11-9-11-32 4-40 5-3 9-3 13-3z" fill="#106868" fillOpacity="0.75" stroke="#e0e0f8" strokeWidth="1.6" />
		<path d="M1084 157h30M1117 124v29" stroke="#d8d8f0" strokeWidth="1.6" />
		<circle cx="1118" cy="157" r="4.4" fill="#d80000" />
		<g fill="#f0e020" fontSize="12">
			<text x="1108" y="119">x</text>
			<text x="1077" y="150">y</text>
			<text x="1112" y="151">z</text>
		</g>
		<g fill="#fff" fontSize="12">
			<text x="1171" y="622">x</text>
			<text x="1153" y="638">y</text>
			<path d="M1171.500 625v12.500H1160" fill="none" stroke="#fff" />
		</g>
	</StyScene>
);

const DimList = ({ label, rows, picked }) => (
	<StyListBox>
		<table aria-label={label}>
			<colgroup>
				<col width="119" />
				<col width="120" />
				<col width="65" />
				<col width="66" />
				<col />
			</colgroup>
			<tbody>
				{rows.map((row, i) => (
					<StyListRow key={row[0]} $picked={i === picked}>
						{row.map((cell, c) => (
							<td key={c}>{cell}</td>
						))}
					</StyListRow>
				))}
			</tbody>
		</table>
	</StyListBox>
);

const ToleranceDialog = () => {
	const [mode, setMode] = useState("opposite");

	return (
		<StyDialog role="dialog" aria-label="Tolerance Analysis">
			<StyDialogTitle>
				<span>Tolerance Analysis</span>
				<StyDialogClose type="button" aria-label="Close">
					<CloseGlyph />
				</StyDialogClose>
			</StyDialogTitle>
			<StyDialogBody>
				<StyHeads>
					<StyRadio>
						<input type="radio" name="mode" checked={mode === "dimension"} onChange={() => setMode("dimension")} />
						Dimension Name
					</StyRadio>
					<span>Part Name</span>
					<span>Nom Value</span>
					<span>Max Tol</span>
					<span>Min Tol</span>
				</StyHeads>
				<DimList label="Dimensions" rows={dimensions} picked={0} />
				<StyHeads $second>
					<StyRadio>
						<input type="radio" name="mode" checked={mode === "opposite"} onChange={() => setMode("opposite")} />
						Dimensions of Opposite Effect
					</StyRadio>
				</StyHeads>
				<DimList label="Opposite dimensions" rows={opposite} />
				<StyLower>
					<StyMainCol>
						<StyEditRow>
							<StyAddCol>
								<StyWinBtn type="button" $h={64}>Add</StyWinBtn>
								<StyWinBtn type="button" $h={64}>Remove</StyWinBtn>
							</StyAddCol>
							<StyUpdateSet>
								<legend>Update List</legend>
								<StyFields>
									<StyField>
										<StyInput $tall defaultValue="" />
										New Nominal Value
									</StyField>
									<StyField>
										<StyInput $tall defaultValue="0.2" />
										New Max Tolerance
									</StyField>
									<StyField>
										<StyInput $tall defaultValue="-0.2" />
										New Min Tolerance
									</StyField>
								</StyFields>
								<StyWinBtn type="button" $h={32} $focus>Update List</StyWinBtn>
								<StyMeanBtn type="button" $h={32}>Apply Mean Value</StyMeanBtn>
							</StyUpdateSet>
						</StyEditRow>
						<StyStackSet>
							<legend>Stack up Analysis</legend>
							<StyStackCol $w={72} $top={10} $gap={16}>
								<StyWinBtn type="button" $h={40}>Worst Case Tolerance</StyWinBtn>
								<StyWinBtn type="button" $h={40} $focus>Statistical Tolerance</StyWinBtn>
							</StyStackCol>
							<StyStackCol $w={63} $top={26} $left={8} $gap={10}>
								<label htmlFor="nominal">Nominal Val</label>
								<StyInput id="nominal" defaultValue="0.4" />
							</StyStackCol>
							<StyStackCol $w={63} $top={3} $left={8} $gap={2}>
								<label htmlFor="maxTol">Max Tol</label>
								<StyInput id="maxTol" defaultValue="0.5" />
								<StyInputLow aria-label="Statistical Max Tol" defaultValue="0.26" />
							</StyStackCol>
							<StyStackCol $w={63} $top={3} $left={16} $gap={2}>
								<label htmlFor="minTol">Min Tol</label>
								<StyInput id="minTol" defaultValue="-0.5" />
								<StyInputLow aria-label="Statistical Min Tol" defaultValue="-0.26" />
							</StyStackCol>
						</StyStackSet>
					</StyMainCol>
					<StySideCol>
						<StyBtnSet>
							<legend>Update 3D</legend>
							<StyWinBtn type="button" $h={32} $focus>Update 3D from List</StyWinBtn>
							<StyWinBtn type="button" $h={32}>Apply Max Value to 3D</StyWinBtn>
							<StyWinBtn type="button" $h={32}>Apply Min Value to 3D</StyWinBtn>
							<StyWinBtn type="button" $h={32}>Apply Nom Value to 3D</StyWinBtn>
						</StyBtnSet>
						<StyBtnSet>
							<legend>Update Gap Tol</legend>
							<StyWinBtn type="button" $h={40}>Apply Worst Case Tolerance</StyWinBtn>
							<StyWinBtn type="button" $h={40} $focus>Apply Statistical Tolerance</StyWinBtn>
						</StyBtnSet>
					</StySideCol>
				</StyLower>
				<StyCredit>Developed by: Elyes Mrabet / eng.elyes.mrabet@gmail.com</StyCredit>
			</StyDialogBody>
		</StyDialog>
	);
};

const CloseGlyph = () => (
	<svg width="12" height="10" viewBox="0 0 12 10">
		<path d="M2 1l8 8M10 1L2 9" stroke="#503030" strokeWidth="4" />
		<path d="M2 1l8 8M10 1L2 9" stroke="#fff" strokeWidth="2.4" />
	</svg>
);

const App = () => (
	<StyApp>
		<GlobalStyle />
		<StyTitleBar>
			<AppIcon size={14} />
			<StyTitle>CATIA V5 - [Asm_Outil_Pivotant.CATProduct]</StyTitle>
			<StyWinControls>
				<button type="button" aria-label="Minimize">
					<svg width="12" height="10"><path d="M1 6h10v3H1z" fill="#fff" stroke="#505050" /></svg>
				</button>
				<button type="button" aria-label="Restore">
					<svg width="12" height="12">
						<path d="M4 1h7v7H4z" fill="none" stroke="#fff" strokeWidth="2" />
						<path d="M1 4h7v7H1z" fill="#707868" stroke="#fff" strokeWidth="1.6" />
					</svg>
				</button>
				<StyClose type="button" aria-label="Close"><CloseGlyph /></StyClose>
			</StyWinControls>
		</StyTitleBar>
		<StyMenuBar>
			<AppIcon size={18} />
			{menus.map((name, i) => (
				<StyMenuItem key={name} type="button" $active={i === 0} $tight={i === 1}>
					{i === 1 ? name : <><u>{name[0]}</u>{name.slice(1)}</>}
				</StyMenuItem>
			))}
			<StyDocControls>
				<button type="button" aria-label="Minimize document">
					<svg width="10" height="10"><path d="M2 8h6" stroke="#607890" strokeWidth="2" /></svg>
				</button>
				<button type="button" aria-label="Restore document">
					<svg width="10" height="10"><path d="M3 3V1h6v5H7M1 4h6v5H1z" fill="none" stroke="#607890" strokeWidth="1.3" /></svg>
				</button>
				<button type="button" aria-label="Close document">
					<svg width="10" height="10"><path d="M2 1l6 8M8 1L2 9" stroke="#506880" strokeWidth="2" /></svg>
				</button>
			</StyDocControls>
		</StyMenuBar>
		<StyTopBar>
			<StyHandle />
			<StyCombos>
				<StyCombo $w={62}>
					<svg><rect x="6" y="4" width="32" height="15" fill="#00d800" stroke="#808080" /></svg>
					<select aria-label="Color"><option aria-label="Green" /></select>
				</StyCombo>
				<StyCombo $w={62} $off>
					<select aria-label="Transparency" disabled><option>0%</option></select>
				</StyCombo>
				<StyCombo $w={62}>
					<svg><path d="M7 11.500h36" stroke="#202020" /></svg>
					<select aria-label="Line width"><option aria-label="Thin" /></select>
				</StyCombo>
				<StyCombo $w={62}>
					<svg><path d="M7 11.500h36" stroke="#202020" /></svg>
					<select aria-label="Line type"><option aria-label="Solid" /></select>
				</StyCombo>
				<StyCombo $w={40} $off>
					<svg><path d="M0 0h22v23H0z" fill="#f0f0f0" /><path d="M5 7l9 9M14 7l-9 9" stroke="#707070" /></svg>
					<select aria-label="Point symbol" disabled><option aria-label="Cross" /></select>
				</StyCombo>
				<StyCombo $w={40} $off>
					<svg>
						<path d="M0 0h22v23H0z" fill="#f0f0f0" />
						<path d="M10 6h5v10h-5" fill="none" stroke="#202040" strokeWidth="1.4" />
						<path d="M6 6h4v4H6zM8 12h4v4H8z" fill="#b8c8f0" />
					</svg>
					<select aria-label="Rendering" disabled><option aria-label="None" /></select>
				</StyCombo>
				<StyCombo $w={63}>
					<select aria-label="Layer"><option>1</option></select>
				</StyCombo>
			</StyCombos>
			<StyTool type="button" aria-label="Painter"><svg viewBox="0 0 20 20" width="22" height="20">{icons.paint}</svg></StyTool>
			<StyTool type="button" aria-label="Wizard"><svg viewBox="0 0 20 20" width="20" height="20">{icons.wizard}</svg></StyTool>
			<StyRightTools>
				{topGroups.map((group) => <ToolGroup key={group.items[0]} group={group} />)}
			</StyRightTools>
		</StyTopBar>
		<StyWork>
			<StyScroll>
				<button type="button" aria-label="Scroll up"><svg width="8" height="8"><path d="M4 1l3 6H1z" /></svg></button>
				<StyTrack />
				<StyThumb />
				<button type="button" aria-label="Scroll down"><svg width="8" height="8"><path d="M4 7l3-6H1z" /></svg></button>
			</StyScroll>
			<StyView><Scene /></StyView>
			<StySideBar>
				{sideColumns.map((groups, i) => (
					<div key={i}>
						{groups.map((group) => <ToolGroup key={group.items[0]} group={group} vertical />)}
					</div>
				))}
			</StySideBar>
		</StyWork>
		<StyBottomBar>
			{bottomGroups.map((group) => <ToolGroup key={group.items[0]} group={group} />)}
			<StyLogo viewBox="0 0 42 36">
				<path d="M10 2c7-3 9 1 4 6" fill="none" stroke="#d83028" strokeWidth="2" />
				<path d="M3 22c3-3 5-7 6-10 7 0 5 8-5 10z" fill="none" stroke="#3c3c90" strokeWidth="2" />
				<path d="M24 9c-8-2-9 3-5 6s2 7-6 6" fill="none" stroke="#f0a030" strokeWidth="2" />
				<text x="7" y="31" fontSize="10" fontWeight="bold" fontStyle="italic">CATIA</text>
			</StyLogo>
		</StyBottomBar>
		<StyStatus>
			<span>Offset.66/Constraints/Asm_Outil_Pivotant selected</span>
			<input type="text" aria-label="Power input" />
			<button type="button" aria-label="Dialog toggle">
				<svg width="16" height="14"><path d="M2 3h7v6H2zM12 1v11H3" fill="none" stroke="#a0a0a8" strokeWidth="1.4" /></svg>
			</button>
			<button type="button" aria-label="Information">
				<svg width="18" height="16">
					<rect x="1" y="1" width="15" height="13" fill="#404040" />
					<circle cx="8" cy="7" r="6" fill="#fff" stroke="#202020" />
					<path d="M8 3v2M8 6v5M6 11h4" stroke="#1878c0" strokeWidth="2" />
				</svg>
			</button>
		</StyStatus>
		<ToleranceDialog />
	</StyApp>
);

const GlobalStyle = createGlobalStyle`
	* {
		box-sizing: border-box;
	}
	body {
		margin: 0;
		background: #000;
		font-family: Roboto, "Open Sans", sans-serif;
		font-size: 12px;
	}
	button,
	input,
	select {
		font: inherit;
		color: inherit;
	}
	svg {
		display: block;
		flex: none;
	}
`;

const StyApp = styled.div`
	position: relative;
	display: flex;
	flex-direction: column;
	min-height: 100vh;
	padding: 0 7px;
	overflow: hidden;
`;

const StyTitleBar = styled.header`
	display: flex;
	align-items: center;
	gap: 6px;
	height: 21px;
	padding-left: 1px;
	background:
		radial-gradient(circle at 265px 15px, rgba(190, 90, 40, 0.7) 3px, transparent 10px),
		radial-gradient(circle at 500px 15px, rgba(90, 200, 80, 0.7) 3px, transparent 9px),
		radial-gradient(circle at 977px 12px, rgba(170, 210, 130, 0.7) 6px, transparent 16px),
		radial-gradient(circle at 1140px 14px, rgba(190, 220, 150, 0.8) 6px, transparent 18px),
		linear-gradient(90deg, #c9dfae 0, #b9d98c 24%, #b7da88 75%, #5f9650 77%, #528a48 90%, #98a890 100%);
	border-bottom: 1px solid #485040;
`;

const StyTitle = styled.span`
	flex: 1;
	color: #101810;
	white-space: nowrap;
`;

const StyWinControls = styled.div`
	display: flex;
	align-self: flex-start;
	margin-right: 3px;
	border: 1px solid #383838;
	border-top: 0;
	border-radius: 0 0 4px 4px;
	overflow: hidden;
	button {
		display: flex;
		align-items: center;
		justify-content: center;
		width: 27px;
		height: 17px;
		padding: 0;
		border: 0;
		border-right: 1px solid #505850;
		background: linear-gradient(#c8d0c0, #8c9888 50%, #707c68);
	}
`;

const redGlass = css`
	background: linear-gradient(#e09888, #c8503c 48%, #a82810 52%, #d06048);
`;

const StyClose = styled.button`
	&& {
		width: 47px;
		border-right: 0;
		${redGlass}
	}
`;

const StyMenuBar = styled.nav`
	display: flex;
	align-items: center;
	height: 20px;
	padding-left: 1px;
	background: #cfcfe8;
`;

const StyMenuItem = styled.button`
	height: 19px;
	padding: 0 ${({ $active, $tight }) => ($tight ? "2px" : $active ? "16px" : "12px")} 0
		${({ $active, $tight }) => ($active || $tight ? "7px" : "11px")};
	border: 0;
	background: ${({ $active }) => ($active ? "#fde0b4" : "transparent")};
	color: #202028;
	white-space: nowrap;
`;

const StyDocControls = styled.div`
	display: flex;
	gap: 3px;
	margin-left: auto;
	padding-right: 2px;
	button {
		display: flex;
		align-items: center;
		justify-content: center;
		width: 16px;
		height: 17px;
		padding: 0;
		border: 1px solid #98a8c0;
		background: #e4ecf8;
	}
`;

const barFace = css`
	background: linear-gradient(#f4f4fc 0, #dcdcf0 25%, #c8c8e2 60%, #b0b0c6 92%, #a0a0b4 100%);
	border-bottom: 2px solid #50505c;
`;

const StyTopBar = styled.div`
	display: flex;
	align-items: center;
	height: 37px;
	padding: 2px 0 0 6px;
	${barFace}
`;

const StyHandle = styled.span`
	flex: none;
	align-self: ${({ $vertical }) => ($vertical ? "center" : "flex-start")};
	width: ${({ $vertical }) => ($vertical ? "16px" : "3px")};
	height: ${({ $vertical }) => ($vertical ? "3px" : "16px")};
	margin: ${({ $vertical }) => ($vertical ? "0 0 5px" : "2px 5px 0 0")};
	border: 1px solid #fff;
	border-right-color: #90909c;
	border-bottom-color: #90909c;
	background: #e8e8f4;
`;

const StyCombos = styled.div`
	display: flex;
	gap: 4px;
	padding-left: 4px;
`;

const StyCombo = styled.div`
	position: relative;
	width: ${({ $w }) => $w}px;
	height: 23px;
	border: 1px solid #b8b8cc;
	background: #fff;
	color: ${({ $off }) => ($off ? "#808080" : "#101010")};
	svg {
		position: absolute;
		width: 46px;
		height: 22px;
		pointer-events: none;
	}
	select {
		width: 100%;
		height: 21px;
		padding: 0 2px;
		border: 0;
		appearance: none;
		background: transparent;
		opacity: 1;
	}
	&::after {
		content: "";
		position: absolute;
		right: 4px;
		top: 10px;
		border: 3px solid transparent;
		border-top: 4px solid ${({ $off }) => ($off ? "#a8a8a8" : "#000")};
		border-bottom: 0;
		pointer-events: none;
	}
`;

const StyTool = styled.button`
	position: relative;
	display: flex;
	flex: none;
	align-items: center;
	justify-content: center;
	width: 28px;
	height: 28px;
	padding: 0;
	border: 0;
	background: none;
	svg {
		overflow: visible;
	}
	${({ $more }) =>
		$more &&
		css`
			&::after {
				content: "";
				position: absolute;
				right: -2px;
				bottom: 0;
				border: 3px solid transparent;
				border-top: 4px solid #000;
				border-bottom: 0;
			}
		`}
`;

const StyRightTools = styled.div`
	display: flex;
	align-self: stretch;
	margin-left: auto;
	padding-right: 6px;
`;

const StyGroup = styled.div`
	display: flex;
	flex-direction: ${({ $vertical }) => ($vertical ? "column" : "row")};
	align-items: center;
	${({ $vertical, $gap }) => ($vertical ? `margin-bottom: ${$gap}px;` : `align-self: stretch; margin-right: ${$gap}px;`)}
`;

const StyWork = styled.main`
	display: flex;
	flex: 1;
	border-left: 1px solid #a8a8a8;
`;

const StyScroll = styled.div`
	display: flex;
	flex-direction: column;
	width: 12px;
	background: #000;
	button {
		display: flex;
		align-items: center;
		justify-content: center;
		height: 12px;
		padding: 0;
		border: 1px solid #4040b0;
		background: #7878ff;
	}
`;

const StyTrack = styled.div`
	flex: 408;
	background:
		linear-gradient(rgba(120, 120, 220, 0.7) 0 58%, transparent 58%),
		repeating-conic-gradient(#7c7cf8 0 25%, #181838 0 50%) 0 0 / 2px 2px;
`;

const StyThumb = styled.div`
	flex: 149;
	border-top: 1px solid #e0e0ff;
	background: #7878ff;
`;

const StyView = styled.div`
	position: relative;
	flex: 1;
	background: #202020;
	overflow: hidden;
`;

const StyScene = styled.svg`
	position: absolute;
	inset: 0;
	width: 100%;
	height: 100%;
`;

const StySideBar = styled.aside`
	display: flex;
	gap: 12px;
	padding: 6px 4px 0 2px;
	border-left: 4px solid #f0f0fa;
	background: linear-gradient(90deg, #cfcfe8 85%, #b4b4cc);
`;

const StyBottomBar = styled.div`
	display: flex;
	align-items: center;
	height: 38px;
	padding: 4px 0 0 6px;
	${barFace}
	border-bottom-width: 1px;
`;

const StyLogo = styled.svg`
	align-self: flex-end;
	width: 42px;
	height: 36px;
	text {
		fill: #30308c;
		font-family: "Liberation Sans", sans-serif;
	}
`;

const StyStatus = styled.footer`
	display: flex;
	align-items: center;
	gap: 2px;
	height: 24px;
	padding: 0 1px 0 3px;
	background: #cfcfe8;
	color: #181820;
	span {
		flex: 1;
		white-space: nowrap;
	}
	input {
		width: 296px;
		height: 20px;
		border: 1px solid #b0b0c0;
		background: #fff;
	}
	button {
		display: flex;
		align-items: center;
		justify-content: center;
		width: 32px;
		height: 21px;
		padding: 0;
		border: 1px solid #f4f4ff;
		border-right-color: #606070;
		border-bottom-color: #606070;
		background: #cfcfe8;
	}
`;

const StyDialog = styled.section`
	position: absolute;
	top: 70px;
	left: calc(50% - 238px);
	width: 475px;
	padding: 0 7px 6px 6px;
	border: 1px solid #181818;
	border-radius: 7px;
	background: linear-gradient(
		#b8c8a0 0,
		#c8d0b0 12%,
		#a8b890 28%,
		#2f7018 29%,
		#2c6818 41%,
		#b8b838 43%,
		#4a2410 46%,
		#3c2814 74%,
		#748c54 82%,
		#88a060 100%
	);
	box-shadow:
		inset 0 0 0 1px rgba(255, 255, 255, 0.6),
		0 2px 10px 3px rgba(0, 0, 0, 0.6);
	font-family: "DejaVu Sans Condensed", "DejaVu Sans", sans-serif;
	font-size: 11px;
	line-height: 13px;
	color: #000;
`;

const StyDialogTitle = styled.header`
	display: flex;
	align-items: center;
	justify-content: space-between;
	height: 28px;
	margin: 0 -5px;
	padding-left: 5px;
	border-radius: 6px 6px 0 0;
	background:
		linear-gradient(rgba(190, 215, 165, 0.8), transparent 40%),
		linear-gradient(90deg, #c0d8a8 0, #bcd4a4 27%, #6a4426 30%, #5c3818 60%, #7a6450 78%, #a09888 100%);
	font-family: Roboto, "Open Sans", sans-serif;
	font-size: 12px;
`;

const StyDialogClose = styled.button`
	display: flex;
	align-self: flex-start;
	align-items: center;
	justify-content: center;
	width: 46px;
	height: 19px;
	margin-right: 2px;
	padding: 0;
	border: 1px solid #401810;
	border-top: 0;
	border-radius: 0 0 4px 4px;
	box-shadow: inset 0 0 0 1px rgba(255, 255, 255, 0.4);
	${redGlass}
`;

const StyDialogBody = styled.div`
	border: 1px solid #504838;
	background: #f5e6c8;
`;

const StyHeads = styled.div`
	display: grid;
	grid-template-columns: ${({ $second }) => ($second ? "1fr" : "121px 119px 66px 66px 1fr")};
	align-items: center;
	height: ${({ $second }) => ($second ? "38px" : "32px")};
	padding: ${({ $second }) => ($second ? "4px 0 0 9px" : "0 0 4px 9px")};
`;

const StyRadio = styled.label`
	display: flex;
	align-items: center;
	gap: 9px;
	white-space: nowrap;
	input {
		appearance: none;
		width: 12px;
		height: 12px;
		margin: 0;
		border: 1px solid #909090;
		border-right-color: #fff;
		border-bottom-color: #fff;
		border-radius: 50%;
		background: #fff;
	}
	input:checked {
		background: radial-gradient(circle, #000 0 2px, #fff 3px);
	}
`;

const sunken = css`
	border: 2px solid #707070;
	border-right-color: #fffaf0;
	border-bottom-color: #fffaf0;
	background: #fff;
`;

const StyListBox = styled.div`
	height: 80px;
	margin: 0 9px 0 8px;
	${sunken}
	table {
		width: 100%;
		table-layout: fixed;
		border-collapse: collapse;
	}
`;

const StyListRow = styled.tr`
	background: ${({ $picked }) => ($picked ? "#3399ff" : "transparent")};
	color: ${({ $picked }) => ($picked ? "#fff" : "#000")};
	td {
		height: 13px;
		padding: 0 0 0 8px;
		overflow: hidden;
		white-space: nowrap;
	}
`;

const StyLower = styled.div`
	display: flex;
	gap: 9px;
	padding: 7px 9px 0 0;
`;

const StyMainCol = styled.div`
	flex: 1;
`;

const StySideCol = styled.div`
	width: 134px;
`;

const fieldset = css`
	min-width: 0;
	margin: 0;
	border: 1px solid #a09888;
	legend {
		padding: 0 4px;
		font-weight: bold;
	}
`;

const StyEditRow = styled.div`
	display: flex;
	gap: 8px;
	height: 151px;
	padding-left: 7px;
`;

const StyAddCol = styled.div`
	display: flex;
	flex-direction: column;
	gap: 7px;
	width: 80px;
	padding-top: 8px;
`;

const StyUpdateSet = styled.fieldset`
	${fieldset}
	flex: 1;
	padding: 3px 1px 0;
	border-bottom: 0;
	legend {
		margin-left: 8px;
	}
`;

const StyFields = styled.div`
	display: grid;
	grid-template-columns: repeat(3, 1fr);
	gap: 5px;
	margin-bottom: 5px;
`;

const StyField = styled.label`
	display: flex;
	flex-direction: column;
	gap: 5px;
	text-align: center;
	color: #302c24;
`;

const StyInput = styled.input`
	width: 100%;
	height: ${({ $tall }) => ($tall ? "27px" : "20px")};
	padding: 0 0 ${({ $tall }) => ($tall ? "4px" : "0")} 9px;
	font-size: 12px;
	${sunken}
`;

const StyInputLow = styled(StyInput)`
	margin-top: 41px;
`;

const StyWinBtn = styled.button`
	display: block;
	width: 100%;
	height: ${({ $h }) => $h}px;
	padding: 0;
	border: 1px solid ${({ $focus }) => ($focus ? "#181818" : "#fff")};
	border-right: 2px solid ${({ $focus }) => ($focus ? "#181818" : "#888")};
	border-bottom: 2px solid ${({ $focus }) => ($focus ? "#181818" : "#888")};
	background: #f0f0f0;
	box-shadow: ${({ $focus }) => ($focus ? "inset 1px 1px #fff, inset -1px -1px #909090" : "none")};
`;

const StyMeanBtn = styled(StyWinBtn)`
	width: 143px;
	margin: 8px auto 0;
`;

const StyStackSet = styled.fieldset`
	${fieldset}
	display: flex;
	height: 133px;
	padding: 0 0 0 8px;
	legend {
		margin-left: 0;
	}
`;

const StyStackCol = styled.div`
	display: flex;
	flex-direction: column;
	gap: ${({ $gap }) => $gap}px;
	width: ${({ $w }) => $w}px;
	margin-left: ${({ $left = 0 }) => $left}px;
	padding-top: ${({ $top }) => $top}px;
	label {
		text-align: center;
		white-space: nowrap;
		color: #302c24;
	}
`;

const StyBtnSet = styled.fieldset`
	${fieldset}
	display: flex;
	flex-direction: column;
	gap: 8px;
	padding: 2px 5px 5px 9px;
`;

const StyCredit = styled.p`
	margin: 0;
	padding-bottom: 4px;
	font-size: 13px;
	font-style: italic;
	font-weight: bold;
	line-height: 16px;
	text-align: center;
	white-space: nowrap;
`;

export default App;
